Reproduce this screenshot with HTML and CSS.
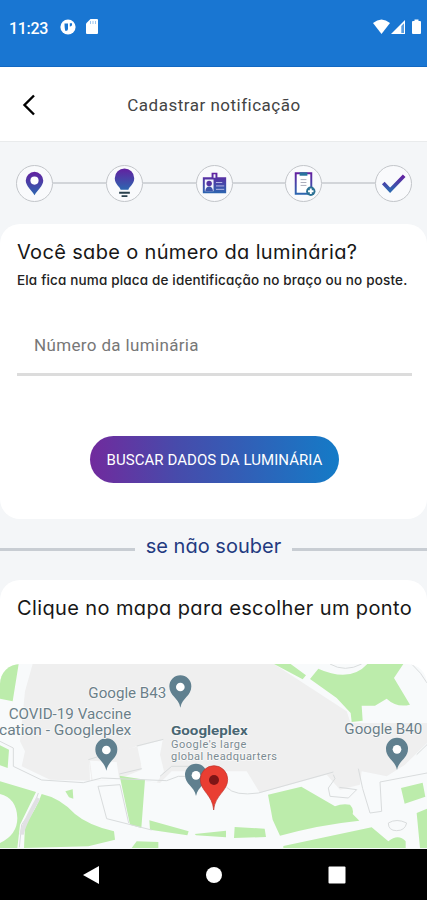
FILE: index.html
```html
<!DOCTYPE html>
<html lang="pt-BR">
<head>
<meta charset="utf-8">
<meta name="viewport" content="width=device-width, initial-scale=1">
<title>Cadastrar notificação</title>
<link rel="stylesheet" href="styles.css">
</head>
<body>
<div class="screen">
  <header class="status">
    <span class="clock">11:23</span>
    <svg class="status-app" width="16" height="16" viewBox="0 0 16 16"><circle cx="8" cy="8" r="7.6" fill="#fff"/><path d="M4.500 4.500H8V10Q8 12 5.500 12Q4.500 10 4.500 4.500zM9.800 4.200H12Q12.500 7.500 9.800 7.500z" fill="#1976d2"/></svg>
    <svg class="status-sd" width="12" height="15" viewBox="0 0 12 15"><path d="M4.500 0H11Q12 0 12 1V14Q12 15 11 15H1Q0 15 0 14V4.500z" fill="#fff"/><path d="M4.500 2v3M7 2v3M9.500 2v3" stroke="#9cc4ee" stroke-width="1"/></svg>
    <svg class="status-net" width="50" height="16" viewBox="0 0 50 16"><path d="M0 4Q8.500-3 17 4L8.500 15z" fill="#fff"/><path d="M18 15L32 1V15z" fill="#fff"/><path d="M28.300 7L31 4.200V14H28.300z" fill="#5b9ee0"/><path d="M39 3Q39 2 40 2H41.500V.5H45.500V2H47Q48 2 48 3V14Q48 15 47 15H40Q39 15 39 14z" fill="#fff"/></svg>
  </header>

  <nav class="appbar">
    <svg class="back" width="14" height="22" viewBox="0 0 14 22"><path d="M12 1.500L2.500 11L12 20.500" fill="none" stroke="#000" stroke-width="2.400"/></svg>
    <h1>Cadastrar notificação</h1>
  </nav>

  <main>
    <svg class="defs" width="0" height="0"><defs><linearGradient id="tint" x1="0" y1="0" x2="0" y2="1"><stop offset="0" stop-color="#6320a0"/><stop offset="1" stop-color="#2d66b0"/></linearGradient></defs></svg>
    <div class="steps">
      <div class="step"><svg viewBox="0 0 36 36"><path d="M18 30C15 25 9 20.500 9 15A9 9 0 0 1 27 15C27 20.500 21 25 18 30z" fill="url(#tint)"/><circle cx="18" cy="15" r="4.200" fill="#fff"/></svg></div>
      <i></i>
      <div class="step"><svg viewBox="0 0 36 36"><path d="M14 24.500C13.500 21 8 19 8 12.500A10 10 0 0 1 28 12.500C28 19 22.500 21 22 24.500z" fill="url(#tint)"/><path d="M12.500 27.500H23.500M15 31H21" stroke="#29404c" stroke-width="2"/></svg></div>
      <i></i>
      <div class="step"><svg viewBox="0 0 36 36"><path d="M6 11.500H30V28H6zM15 7H21V14H15z" fill="url(#tint)"/><path d="M17 8.500H19V12H17zM8 14H17V26H8z" fill="#f3f4fc"/><circle cx="12.500" cy="18" r="2.800" fill="#5533a2"/><path d="M8.500 26Q9 21 12.500 21T16.500 26z" fill="#3e54aa"/><path d="M19.500 17H26M19.500 20.500H28M19.500 24H28" stroke="#b9b8e6" stroke-width="1"/></svg></div>
      <i></i>
      <div class="step"><svg viewBox="0 0 36 36"><path d="M10 7.500H26V28.500H10z" fill="#fff" stroke="url(#tint)" stroke-width="2"/><path d="M14 6.500H22V10H14z" fill="#28739d"/><path d="M15 14H21M15 17H21M15 20H21" stroke="#aaabb9"/><circle cx="25.500" cy="26" r="4.800" fill="#2b7194"/><path d="M25.500 23.200V28.800M22.700 26H28.300" stroke="#fff" stroke-width="2"/></svg></div>
      <i></i>
      <div class="step"><svg viewBox="0 0 36 36"><path d="M7.500 17.500L14.500 25L29 10" stroke="url(#tint)" stroke-width="3.800" fill="none"/></svg></div>
    </div>

    <section class="card search-card">
      <h2><span class="fit-question">Você sabe o número da luminária?</span></h2>
      <p class="hint">Ela fica numa placa de identificação no braço ou no poste.</p>
      <div class="field">Número da luminária</div>
      <button type="button">BUSCAR DADOS DA LUMINÁRIA</button>
    </section>

    <div class="divider"><span>se não souber</span></div>

    <section class="card map-card">
      <h2><span class="fit-map">Clique no mapa para escolher um ponto</span></h2>
      <svg class="map" viewBox="0 28 1281 555" preserveAspectRatio="none">
        <defs><g id="place"><path d="M0 96C-6 65-33 62-33 32A33 33 0 0 1 33 32C33 62 6 65 0 96z" fill="#60808f"/><circle cy="34" r="13" fill="#fff"/></g></defs>
        <rect y="28" width="1281" height="555" fill="#f8fafb"/>
        <path d="M98 28H822L1040 170L1052 205H1281V265L1215 330L1160 365L1085 350L1080 390L1020 405L980 360L780 415L740 350H515L480 385L438 380L412 274L370 290L350 372L275 378L268 315L270 378L150 375L65 335L75 290L60 260L75 110z" fill="#efefef"/>
        <path d="M268 315L340 292L420 274L425 345L350 375L275 378z" fill="#efefef"/>
        <path d="M270 318L350 322L358 375L278 378zM412 276L488 256L480 300L492 350L470 384L434 378z" fill="#f8fafb"/>
        <g fill="#bcecab">
          <path d="M0 28H56L38 140L0 132zM0 272L27 285L23 340L0 332zM0 380L108 412L60 510L52 580H0V565Q52 540 52 490Q50 430 0 418z"/>
          <path d="M125 418Q180 430 225 478Q265 512 342 530L345 555L265 575L72 580L75 510Q108 465 125 418zM196 410L218 404L220 432L207 428zM359 363L435 375L424 520L390 510zM448 497L566 530L562 542L450 525zM410 560L475 562V580H395z"/>
          <path d="M584 538L678 528V548L588 542zM704 517L794 522L798 547L702 550zM804 420L904 396L1005 455Q1025 446 1050 450Q1062 462 1058 478L1078 498Q960 510 840 543L818 495zM850 574L1115 518L1165 560Q1195 535 1217 560V580H850zM1203 400L1268 384L1276 426L1214 447zM1250 475L1281 462V580H1260z"/>
          <path d="M822 28H872L918 62L908 74zM930 73L955 42Q1050 85 1102 28H1210L1182 70L1230 150Q1190 160 1160 132L1125 153H1085L1088 198L1055 202L1052 175L1010 130z"/>
        </g>
        <g fill="none" stroke="#d9dcdd" stroke-width="3">
          <path d="M0 260L40 280V335L125 376L250 384L305 370L500 378L535 365H570M265 315L340 292M410 274L490 254M480 365L515 335H570M358 358L425 342M294 395L320 492L455 526M294 395L360 390L386 505M115 415Q102 460 65 510L58 578"/>
          <path d="M680 398Q705 425 775 415L1000 352M1000 360L1005 372L985 400L990 425L1045 430L1070 405L1018 398M1075 342L1088 402L1110 475L1145 470L1140 382L1281 355M1165 505Q1190 490 1220 505Q1215 528 1190 528T1165 505M1235 28Q1265 55 1281 85M990 28Q1035 54 1085 28M1250 300L1281 270"/>
        </g>
        <path d="M65 540Q66 518 115 430" fill="none" stroke="#e1e1e4" stroke-width="13"/>
        <use href="#place" x="541" y="63"/><use href="#place" x="319" y="252"/><use href="#place" x="588" y="328"/><use href="#place" x="1191" y="250"/>
        <path d="M641 466C638 420 601 410 601 374A41 41 0 0 1 683 374C683 410 645 420 641 466z" fill="#e93e32" stroke="#bd3029" stroke-width="2"/><circle cx="642" cy="376" r="15" fill="#7e1516"/>
        <g class="place-labels">
          <text x="265" y="130" textLength="234" lengthAdjust="spacingAndGlyphs">Google B43</text>
          <text x="26" y="194" textLength="368" lengthAdjust="spacingAndGlyphs">COVID-19 Vaccine</text>
          <text x="-3" y="241" textLength="397" lengthAdjust="spacingAndGlyphs">cation - Googleplex</text>
          <text x="1033" y="237" textLength="234" lengthAdjust="spacingAndGlyphs">Google B40</text>
          <text class="place-name" x="513" y="242" textLength="230" lengthAdjust="spacingAndGlyphs">Googleplex</text>
          <text class="place-note" x="513" y="279" textLength="226">Google's large</text>
          <text class="place-note" x="513" y="316" textLength="318">global headquarters</text>
        </g>
      </svg>
    </section>
  </main>

  <footer>
    <svg width="18" height="20" viewBox="0 0 18 20"><path d="M17 1V19L1 10z" fill="#fff"/></svg>
    <svg width="18" height="18" viewBox="0 0 18 18"><circle cx="9" cy="9" r="8" fill="#fff"/></svg>
    <svg width="18" height="18" viewBox="0 0 18 18"><rect x=".5" y=".5" width="17" height="17" rx="1" fill="#fff"/></svg>
  </footer>
</div>
</body>
</html>
```
FILE: styles.css
```css
* { box-sizing: border-box; }
body { margin: 0; font-family: Roboto, sans-serif; background: #f4f6f8; }
h1, h2, p { margin: 0; font-weight: 400; }
.screen { width: 427px; height: 900px; display: flex; flex-direction: column; overflow: hidden; }
.status { height: 67px; flex: none; display: flex; align-items: flex-start; padding: 19px 8px 0 9px; background: #1976d2; border-bottom: 1px solid #1268c2; color: #fff; }
.clock { font-size: 16px; line-height: 19px; font-weight: 500; letter-spacing: -.3px; width: 51px; white-space: nowrap; }
.status-app { margin-right: 10px; }
.status-net { margin-left: auto; margin-right: -4px; }
.appbar { height: 75px; flex: none; display: grid; grid-template-columns: 42px 1fr 42px; align-items: center; background: #fff; border-bottom: 1px solid #e9ebec; }
.back { margin-left: 22px; margin-top: 2px; }
h1 { font-size: 17px; line-height: 24px; letter-spacing: .5px; color: #444; text-align: center; white-space: nowrap; padding: 1px 0 0 1px; }
main { flex: 1; min-height: 0; display: flex; flex-direction: column; }
.defs { position: absolute; }
.steps { height: 82px; flex: none; display: flex; align-items: center; padding: 0 15px 0 16px; }
.steps i { flex: 1; height: 2px; background: #d2d5d9; }
.step { width: 37px; height: 37px; border: 1px solid #c3c6ca; border-radius: 50%; background: #f9fafc; flex: none; }
.step svg { display: block; width: 35px; height: 35px; }
.card { background: #fff; flex: none; }
.search-card { height: 295px; border-radius: 20px; padding: 15px 15px 0 17px; display: flex; flex-direction: column; }
h2, .hint, .divider { font-family: Inter, sans-serif; font-feature-settings: "cv11"; white-space: nowrap; }
h2 { font-size: 20px; line-height: 27px; color: #171717; }
.fit-question { letter-spacing: .34px; }
.fit-map { letter-spacing: .38px; }
.hint { font-size: 13.5px; line-height: 18px; margin-top: 5px; color: #222; letter-spacing: .16px; font-weight: 500; }
.field { height: 63px; margin-top: 24px; padding: 20px 17px 0; border-bottom: 3px solid #dcdcdc; color: #777; font-size: 17px; line-height: 24px; letter-spacing: .35px; margin-bottom: 60px; }
button { width: 249px; height: 47px; align-self: center; border: 0; border-radius: 24px; padding: 0; font: 400 15px Roboto, sans-serif; letter-spacing: .06px; color: #fff; background: linear-gradient(90deg, #712a9d, #474bab 35%, #147bc7); white-space: nowrap; }
.divider { height: 61px; flex: none; display: flex; align-items: center; gap: 11px; padding-bottom: 7px; color: #233a80; font-size: 20px; letter-spacing: .03px; }
.divider::before, .divider::after { content: ""; flex: 1; height: 3px; margin-top: 6px; background: #c8cdd3; }
.map-card { height: 269px; border-radius: 20px 20px 0 0; padding-top: 15px; }
.map-card h2 { padding-left: 17px; }
.map { display: block; width: 427px; height: 185px; margin-top: 42px; border-radius: 20px 20px 0 0; }
.place-labels { font: 400 43px Roboto, sans-serif; fill: #6b7f89; stroke: #fafafa; stroke-width: 4px; paint-order: stroke; }
.place-name { font-size: 41px; font-weight: 700; fill: #496673; }
.place-note { font-size: 33px; fill: #7b8a91; }
footer { height: 51px; flex: none; display: grid; grid-template-columns: 18px 18px 18px; column-gap: 105px; align-items: center; justify-content: center; background: #000; }
```
